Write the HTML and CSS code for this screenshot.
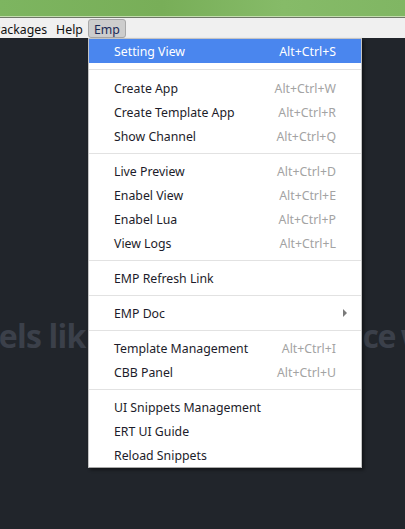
FILE: index.html
```html
<!DOCTYPE html>
<html>
<head>
<meta charset="utf-8">
<link rel="stylesheet" href="styles.css">
</head>
<body>
<div class="titlebar"></div>
<div class="menubar">
  <span class="mb-item first">Packages</span>
  <span class="mb-item">Help</span>
  <span class="mb-item active">Emp</span>
</div>
<div class="editor">
  <div class="hero"><span class="hero-l">Feels lik</span><span class="hero-r">ce w</span></div>
</div>
<div class="menu">
  <div class="item hl"><span>Setting View</span><span class="key">Alt+Ctrl+S</span></div>
  <div class="sep wide"></div>
  <div class="item"><span>Create App</span><span class="key">Alt+Ctrl+W</span></div>
  <div class="item"><span>Create Template App</span><span class="key">Alt+Ctrl+R</span></div>
  <div class="item"><span>Show Channel</span><span class="key">Alt+Ctrl+Q</span></div>
  <div class="sep"></div>
  <div class="item"><span>Live Preview</span><span class="key">Alt+Ctrl+D</span></div>
  <div class="item"><span>Enabel View</span><span class="key">Alt+Ctrl+E</span></div>
  <div class="item"><span>Enabel Lua</span><span class="key">Alt+Ctrl+P</span></div>
  <div class="item"><span>View Logs</span><span class="key">Alt+Ctrl+L</span></div>
  <div class="sep"></div>
  <div class="item"><span>EMP Refresh Link</span></div>
  <div class="sep"></div>
  <div class="item"><span>EMP Doc</span><span class="arrow"></span></div>
  <div class="sep"></div>
  <div class="item"><span>Template Management</span><span class="key">Alt+Ctrl+I</span></div>
  <div class="item"><span>CBB Panel</span><span class="key">Alt+Ctrl+U</span></div>
  <div class="sep"></div>
  <div class="item"><span>UI Snippets Management</span></div>
  <div class="item"><span>ERT UI Guide</span></div>
  <div class="item"><span>Reload Snippets</span></div>
</div>
</body>
</html>
```

FILE: styles.css
```css
html, body {
  margin: 0;
  padding: 0;
  height: 100%;
  overflow: hidden;
}
body {
  background: #21252b;
  font-family: "Noto Sans", "Open Sans", sans-serif;
  font-size: 12.3px;
  display: flex;
  flex-direction: column;
}
.titlebar {
  height: 16px;
  background: linear-gradient(90deg, #7db560 0%, #78ae58 40%, #86bb68 70%, #80b663 100%);
  border-bottom: 1px solid #c3dcae;
  flex: none;
}
.menubar {
  height: 20px;
  background: #f0f0f0;
  border-top: 1px solid #6e7768;
  display: flex;
  align-items: center;
  flex: none;
  color: #111;
}
.mb-item {
  padding: 3px 4px 0;
  line-height: 14px;
  margin-right: 1px;
}
.mb-item.first {
  margin-left: -11px;
}
.mb-item.active {
  background: #cdcdcd;
  border: 1px solid #a8a8a8;
  border-radius: 3px;
  padding: 3px 5px 0;
  color: #1a2a55;
}
.editor {
  flex: 1;
  overflow: hidden;
}
.hero {
  display: flex;
  white-space: nowrap;
  font-family: "Open Sans", "Noto Sans", sans-serif;
  font-weight: 700;
  font-size: 32px;
  letter-spacing: -0.8px;
  color: #3b404a;
  margin-top: 276px;
}
.hero-l {
  flex: none;
  margin-left: -36px;
}
.hero-r {
  flex: none;
  margin-left: 277px;
  letter-spacing: -1.5px;
  word-spacing: -1px;
}
.menu {
  position: absolute;
  left: 88px;
  top: 38px;
  width: 272px;
  background: #fff;
  border: 1px solid #c4c4c4;
  border-bottom-color: #a9a9a9;
  box-shadow: 2px 2px 3px rgba(0, 0, 0, 0.45);
  color: #1c1c2a;
}
.item {
  height: 24px;
  display: flex;
  align-items: center;
  justify-content: space-between;
  padding: 0 25px 0 25px;
}
.item.hl {
  background: #4a86ee;
  color: #fff;
}
.item.hl .key {
  color: #fff;
}
.key {
  color: #a3a3a3;
}
.sep {
  height: 1px;
  background: #e2e2e2;
  margin: 5px 0;
}
.sep.wide {
  margin: 6px 0;
}
.arrow {
  width: 0;
  height: 0;
  border-left: 4px solid #7a7a7a;
  border-top: 4px solid transparent;
  border-bottom: 4px solid transparent;
  margin-right: -11px;
}
```
